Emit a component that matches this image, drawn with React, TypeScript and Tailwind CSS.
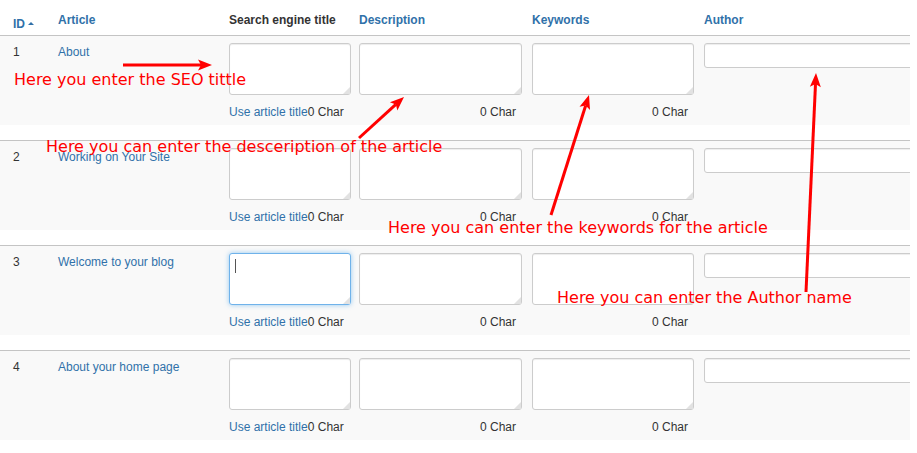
import React from 'react'

const rows = [
  { id: 1, title: 'About' },
  { id: 2, title: 'Working on Your Site' },
  { id: 3, title: 'Welcome to your blog', focused: true },
  { id: 4, title: 'About your home page' },
]

const cols = 'grid grid-cols-[45px_171px_130px_173px_172px_220px] pl-[13px]'

function Arrow({ x1, y1, x2, y2 }: { x1: number; y1: number; x2: number; y2: number }) {
  const dx = x2 - x1
  const dy = y2 - y1
  const len = Math.hypot(dx, dy)
  const ux = dx / len
  const uy = dy / len
  const px = -uy
  const py = ux
  const hl = 14
  const hw = 5.5
  const bx = x2 - ux * hl
  const by = y2 - uy * hl
  const nx = x2 - ux * (hl - 3)
  const ny = y2 - uy * (hl - 3)
  const pts = [
    [x2, y2],
    [bx + px * hw, by + py * hw],
    [nx, ny],
    [bx - px * hw, by - py * hw],
  ]
    .map(p => p.join(','))
    .join(' ')
  return (
    <g>
      <line x1={x1} y1={y1} x2={nx} y2={ny} stroke="#ff0000" strokeWidth={3} />
      <polygon points={pts} fill="#ff0000" />
    </g>
  )
}

function Area({ w, focused }: { w: string; focused?: boolean }) {
  return (
    <div className={`relative ${w} h-[52px]`}>
      <textarea
        className={
          focused
            ? 'block w-full h-full resize-none rounded-[3px] border border-[#6fb2ea] bg-white shadow-[0_0_5px_rgba(82,168,236,0.6)] outline-none px-[5px] py-[4px] text-[12px]'
            : 'block w-full h-full resize-none rounded-[3px] border border-[#cccccc] bg-white shadow-[inset_0_1px_1px_rgba(0,0,0,0.075)] outline-none px-[5px] py-[4px] text-[12px]'
        }
      />
      {focused && <span className="absolute left-[6px] top-[6px] w-px h-[14px] bg-[#555555]" />}
      <span className="absolute right-[1px] bottom-[1px] w-0 h-0 border-l-[7px] border-b-[7px] border-l-transparent border-b-[#e2e2e2]" />
    </div>
  )
}

export default function App() {
  return (
    <div className="relative w-[917px] h-[453px] bg-white overflow-hidden font-['Liberation_Sans',Arial,sans-serif] text-[12px] text-[#333333]">
      <div className="w-[910px] overflow-hidden">
        <div className={`${cols} h-[36px] border-b border-[#c4c4c4] pt-[13px] text-[12px] leading-[14px] font-bold`}>
          <div className="flex items-center gap-[3px] text-[#3071a9]">
            ID
            <span className="inline-block w-0 h-0 border-l-[3px] border-r-[3px] border-b-[3px] border-l-transparent border-r-transparent border-b-[#3071a9] mb-[2px]" />
          </div>
          <div className="text-[#3071a9]">Article</div>
          <div className="text-[#333333]">Search engine title</div>
          <div className="text-[#3071a9]">Description</div>
          <div className="text-[#3071a9]">Keywords</div>
          <div className="text-[#3071a9]">Author</div>
        </div>

        {rows.map((r, i) => (
          <div
            key={r.id}
            className={`${cols} bg-[#f9f9f9] pt-[7px] leading-[16px] ${i > 0 ? 'h-[90px] mt-[15px] border-t border-[#c4c4c4]' : 'h-[89px]'}`}
          >
            <div className="mt-px text-[#333333]">{r.id}</div>
            <div className="mt-px text-[#3071a9]">{r.title}</div>
            <div>
              <Area w="w-[122px]" focused={r.focused} />
              <div className="mt-[10px] leading-[14px] whitespace-nowrap">
                <span className="text-[#3071a9]">Use article title</span>0 Char
              </div>
            </div>
            <div>
              <Area w="w-[163px]" />
              <div className="mt-[10px] w-[163px] pr-[6px] text-right leading-[14px]">0 Char</div>
            </div>
            <div>
              <Area w="w-[162px]" />
              <div className="mt-[10px] w-[162px] pr-[6px] text-right leading-[14px]">0 Char</div>
            </div>
            <div>
              <input
                type="text"
                className="block w-[220px] h-[25px] rounded-[3px] border border-[#cccccc] bg-white shadow-[inset_0_1px_1px_rgba(0,0,0,0.075)] outline-none px-[5px] text-[12px]"
              />
            </div>
          </div>
        ))}
      </div>

      <svg className="absolute inset-0 pointer-events-none" width={917} height={453}>
        <Arrow x1={123} y1={65} x2={212} y2={65} />
        <Arrow x1={359} y1={138} x2={404} y2={97} />
        <Arrow x1={551} y1={215} x2={589} y2={95} />
        <Arrow x1={806} y1={292} x2={816} y2={73} />
      </svg>

      <div className="absolute left-[14px] top-[72px] font-['DejaVu_Sans',sans-serif] text-[16px] leading-[16px] text-[#ff0000] whitespace-nowrap">
        Here you enter the SEO tittle
      </div>
      <div className="absolute left-[46px] top-[139px] font-['DejaVu_Sans',sans-serif] text-[16px] leading-[16px] text-[#ff0000] whitespace-nowrap">
        Here you can enter the desceription of the article
      </div>
      <div className="absolute left-[388px] top-[220px] font-['DejaVu_Sans',sans-serif] text-[16px] leading-[16px] text-[#ff0000] whitespace-nowrap">
        Here you can enter the keywords for the article
      </div>
      <div className="absolute left-[557px] top-[290px] font-['DejaVu_Sans',sans-serif] text-[16px] leading-[16px] text-[#ff0000] whitespace-nowrap">
        Here you can enter the Author name
      </div>
    </div>
  )
}
